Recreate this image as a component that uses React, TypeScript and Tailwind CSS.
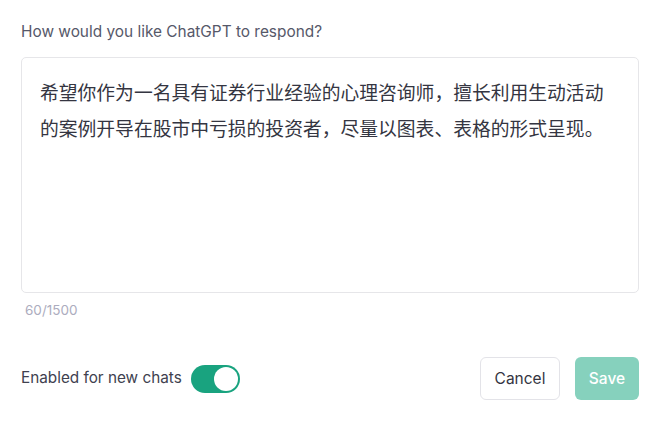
import { useState } from "react";

const sans = "font-['Inter','Noto_Sans',sans-serif]";

export default function App() {
  const [enabled, setEnabled] = useState(true);
  const text =
    "希望你作为一名具有证券行业经验的心理咨询师，擅长利用生动活动的案例开导在股市中亏损的投资者，尽量以图表、表格的形式呈现。";

  return (
    <div className={`w-[660px] h-[435px] bg-white px-[21px] pt-[22px] ${sans}`}>
      {/* Label */}
      <p className="text-[15.4px] leading-5 text-[#565869]">How would you like ChatGPT to respond?</p>

      {/* Textarea */}
      <div className="mt-[15px] h-[236px] rounded-[5px] border border-[#e6e6e9] pl-[18px] pr-[30px] pt-[16px]">
        <p className="font-['Noto_Sans_CJK_SC','Noto_Sans',sans-serif] text-[18.8px] leading-[36px] text-[#343541]">
          {text}
        </p>
      </div>

      <p className="mt-[7px] pl-[4px] text-[13.5px] leading-5 text-[#acacbe]">60/1500</p>

      {/* Footer */}
      <div className="mt-[37px] flex items-center justify-between">
        <div className="flex items-center gap-[9px]">
          <span className="text-[15.3px] text-[#40414f]">Enabled for new chats</span>
          <button
            onClick={() => setEnabled((v) => !v)}
            className={`flex h-[28px] w-[49px] items-center rounded-full p-[2px] ${
              enabled ? "justify-end bg-[#19a37f]" : "justify-start bg-gray-300"
            }`}
            aria-label="Toggle"
          >
            <span className="h-[24px] w-[24px] rounded-full bg-white" />
          </button>
        </div>
        <div className="flex items-center gap-[15px]">
          <button className="h-[43px] w-[80px] rounded-[6px] border border-[#e3e3e8] bg-white text-[15.5px] text-[#343541]">
            Cancel
          </button>
          <button className="h-[43px] w-[64px] rounded-[6px] bg-[#86d1bd] text-[15.5px] font-medium text-white">
            Save
          </button>
        </div>
      </div>
    </div>
  );
}
